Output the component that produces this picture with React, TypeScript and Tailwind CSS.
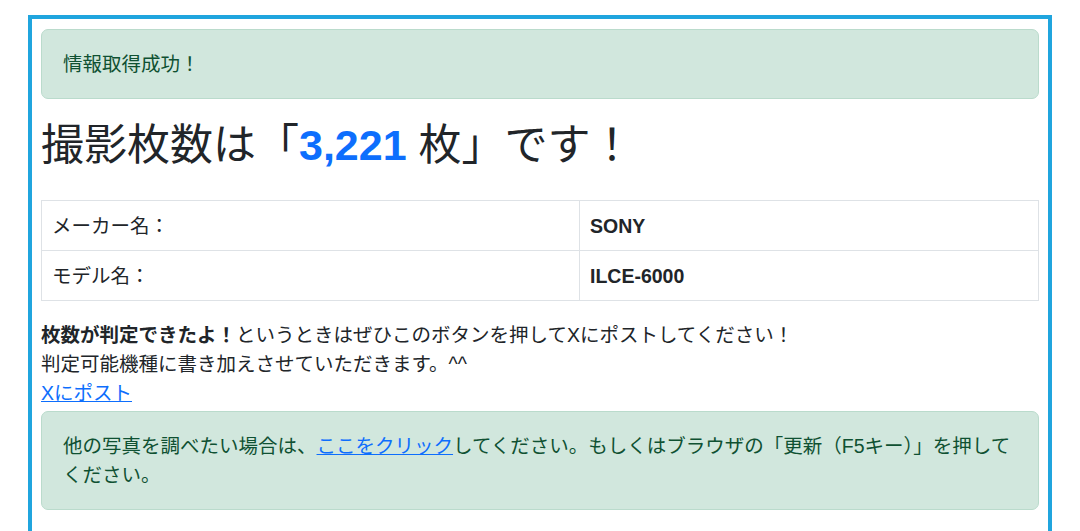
import React from "react";

export default function App() {
  return (
    <div className="min-h-screen bg-white px-[28px] pt-[15px] font-['Liberation_Sans','Noto_Sans_CJK_JP',sans-serif] text-[19.5px] leading-[29px] text-[#212529]">
      <div className="border-4 border-[#20a5de] px-[9px] pt-[10px] pb-[80px]">
        <div className="mb-[19px] rounded-[7px] border border-[#badbcc] bg-[#d1e7dd] px-[21px] pt-[20px] pb-[19px] text-[#0f5132]">
          情報取得成功！
        </div>

        <h1 className="mb-[30px] pt-[2px] text-[43px] font-normal leading-[50px] text-[#212529]">
          撮影枚数は「<span className="font-bold text-[#0d6efd]">3,221</span> 枚」です！
        </h1>

        <table className="mb-[19px] w-full border-collapse border border-[#dee2e6]">
          <tbody>
            <tr>
              <td className="w-[538px] border border-[#dee2e6] px-[10px] pt-[11px] pb-[9px] align-middle">
                メーカー名：
              </td>
              <td className="border border-[#dee2e6] px-[10px] pt-[11px] pb-[9px] align-middle font-bold">
                SONY
              </td>
            </tr>
            <tr>
              <td className="w-[538px] border border-[#dee2e6] px-[10px] pt-[11px] pb-[9px] align-middle">
                モデル名：
              </td>
              <td className="border border-[#dee2e6] px-[10px] pt-[11px] pb-[9px] align-middle font-bold">
                ILCE-6000
              </td>
            </tr>
          </tbody>
        </table>

        <p className="mb-[3px] pt-[1px]">
          <span className="font-bold">枚数が判定できたよ！</span>
          というときはぜひこのボタンを押してXにポストしてください！
          <br />
          判定可能機種に書き加えさせていただきます。^^
          <br />
          <a href="#" className="text-[#0d6efd] underline">
            Xにポスト
          </a>
        </p>

        <div className="rounded-[7px] border border-[#badbcc] bg-[#d1e7dd] px-[21px] pt-[20px] pb-[19px] text-[#0f5132]">
          他の写真を調べたい場合は、
          <a href="#" className="text-[#0d6efd] underline">
            ここをクリック
          </a>
          してください。もしくはブラウザの「更新（F5キー）」を押してください。
        </div>
      </div>
    </div>
  );
}
